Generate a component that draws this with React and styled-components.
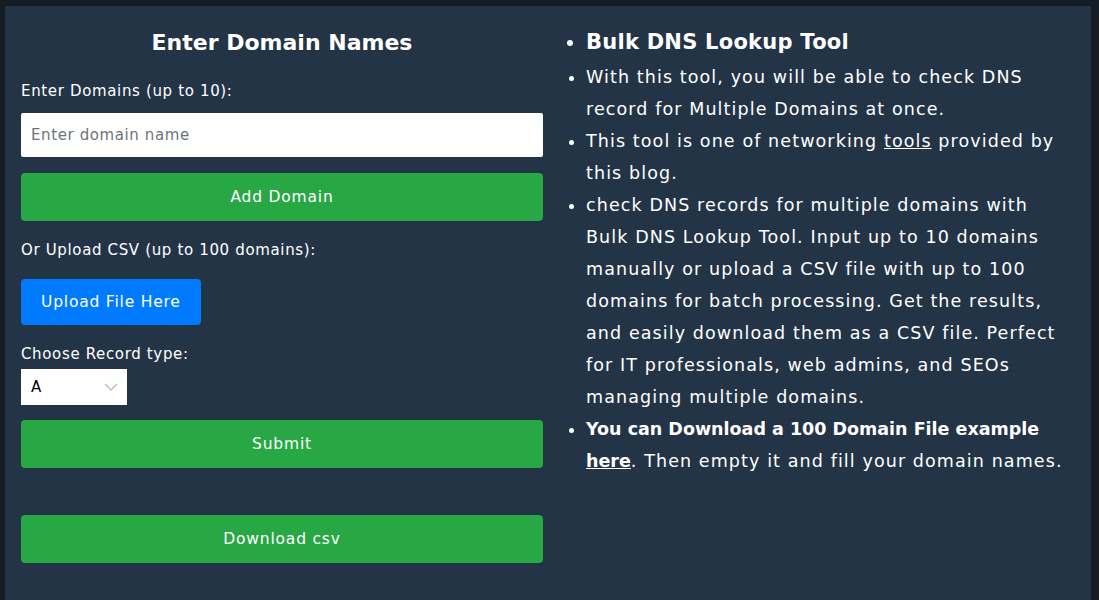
import styled, { createGlobalStyle } from 'styled-components';

const GlobalStyle = createGlobalStyle`
    html, body {
        margin: 0;
        padding: 0;
        background: #161c25;
    }
    body {
        font-family: "DejaVu Sans", "Noto Sans", sans-serif;
    }
    * {
        box-sizing: border-box;
    }
`;

function App() {
    return (
        <>
            <GlobalStyle />
            <Page>
                <Panel>
                    <FormColumn>
                        <Heading>Enter Domain Names</Heading>
                        <Label $bottom={10}>Enter Domains (up to 10):</Label>
                        <TextInput placeholder="Enter domain name" />
                        <Button $color="#28a745" $full>Add Domain</Button>
                        <Label $top={17} $bottom={17}>Or Upload CSV (up to 100 domains):</Label>
                        <Button $color="#007bff">Upload File Here</Button>
                        <Label $top={17} $bottom={3}>Choose Record type:</Label>
                        <SelectBox>
                            <span>A</span>
                            <Chevron viewBox="0 0 14 8">
                                <path d="M1 1l6 6 6-6" fill="none" stroke="#c4c4c4" strokeWidth="1.6" />
                            </Chevron>
                        </SelectBox>
                        <Button $color="#28a745" $full>Submit</Button>
                        <Button $color="#28a745" $full $top={47}>Download csv</Button>
                    </FormColumn>
                    <InfoList>
                        <InfoTitle>Bulk DNS Lookup Tool</InfoTitle>
                        <InfoItem>With this tool, you will be able to check DNS record for Multiple Domains at once.</InfoItem>
                        <InfoItem>This tool is one of networking <PlainLink>tools</PlainLink> provided by this blog.</InfoItem>
                        <InfoItem>
                            check DNS records for multiple domains with Bulk DNS Lookup Tool. Input up to 10 domains
                            manually or upload a CSV file with up to 100 domains for batch processing. Get the results,
                            and easily download them as a CSV file. Perfect for IT professionals, web admins, and SEOs
                            managing multiple domains.
                        </InfoItem>
                        <InfoItem>
                            <Strong>You can Download a 100 Domain File example <BoldLink>here</BoldLink></Strong>. Then empty it and fill your domain names.
                        </InfoItem>
                    </InfoList>
                </Panel>
            </Page>
        </>
    );
}

const Page = styled.div`
    width: 1099px;
    height: 600px;
    padding: 6px 8px 0 5px;
    overflow: hidden;
`;

const Panel = styled.div`
    height: 100%;
    background: #243447;
    display: grid;
    grid-template-columns: 522px 1fr;
    column-gap: 4px;
    padding: 16px 16px 0 16px;
    color: #ffffff;
`;

const FormColumn = styled.div`
    display: flex;
    flex-direction: column;
    align-items: flex-start;
`;

const Heading = styled.h2`
    align-self: stretch;
    text-align: center;
    margin: 4px 0 19px;
    font-size: 22px;
    font-weight: 700;
    line-height: 34px;
`;

const Label = styled.label`
    font-size: 15px;
    line-height: 24px;
    letter-spacing: 0.65px;
    margin: ${(p) => p.$top || 0}px 0 ${(p) => p.$bottom || 0}px;
`;

const TextInput = styled.input`
    width: 100%;
    height: 44px;
    border: none;
    border-radius: 2px;
    padding: 0 10px;
    font-family: inherit;
    font-size: 15px;
    letter-spacing: 0.6px;
    margin-bottom: 16px;
    &::placeholder {
        color: #6c757d;
    }
`;

const Button = styled.button`
    width: ${(p) => (p.$full ? '100%' : 'auto')};
    height: ${(p) => (p.$full ? 48 : 46)}px;
    padding: 0 20px;
    background: ${(p) => p.$color};
    color: #ffffff;
    border: none;
    border-radius: 4px;
    font-family: inherit;
    font-size: 15.5px;
    letter-spacing: 0.8px;
    margin-top: ${(p) => p.$top || 0}px;
`;

const SelectBox = styled.div`
    width: 106px;
    height: 36px;
    background: #ffffff;
    color: #000000;
    display: flex;
    align-items: center;
    justify-content: space-between;
    padding: 0 9px 0 10px;
    font-size: 15px;
    margin-bottom: 15px;
`;

const Chevron = styled.svg`
    width: 14px;
    height: 8px;
`;

const InfoList = styled.ul`
    margin: 0;
    padding: 0 8px 0 39px;
    font-size: 17.5px;
    line-height: 32px;
    letter-spacing: 1.1px;
`;

const InfoTitle = styled.li`
    font-size: 21px;
    font-weight: 700;
    line-height: 34px;
    letter-spacing: 0.25px;
    margin: 3px 0 2px;
`;

const InfoItem = styled.li``;

const Strong = styled.strong`
    letter-spacing: 0;
`;

const PlainLink = styled.a`
    color: inherit;
    text-decoration: underline;
`;

const BoldLink = styled.a`
    color: inherit;
    text-decoration: underline;
    font-weight: 700;
`;

export default App;
